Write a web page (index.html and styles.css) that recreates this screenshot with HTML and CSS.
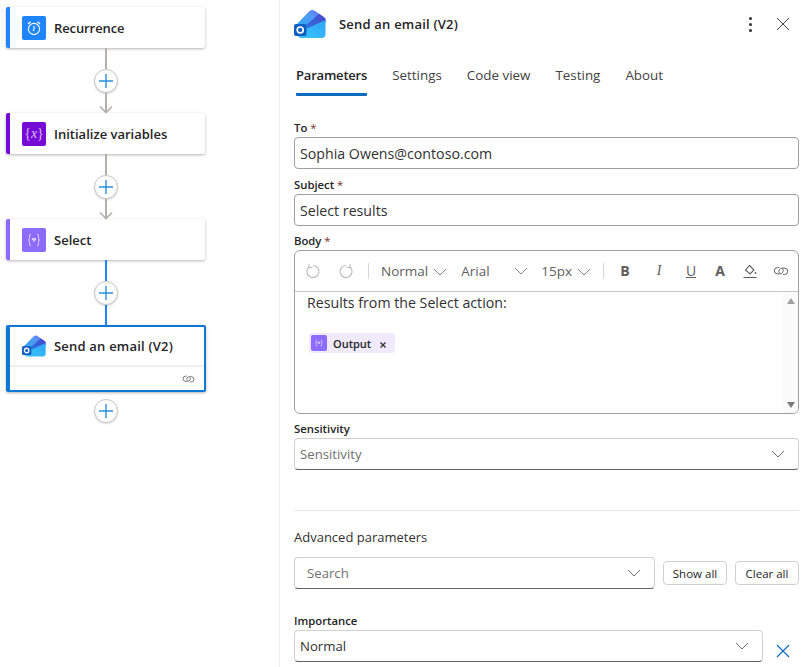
FILE: index.html
```html
<!DOCTYPE html>
<html lang="en">
<head>
    <meta charset="UTF-8">
    <title>Send an email (V2)</title>
    <link rel="stylesheet" href="styles.css">
</head>
<body>
    <svg class="defs" width="0" height="0">
        <defs>
            <linearGradient id="gradBack" x1="0" y1="1" x2="1" y2="0">
                <stop offset="0" stop-color="#27a8f5"/>
                <stop offset=".6" stop-color="#4f9cf5"/>
                <stop offset="1" stop-color="#7a5ff0"/>
            </linearGradient>
            <linearGradient id="gradBand" x1="0" y1="1" x2="1" y2="0">
                <stop offset="0" stop-color="#2a7be8"/>
                <stop offset="1" stop-color="#4a44c8"/>
            </linearGradient>
            <linearGradient id="gradFront" x1="0" y1="1" x2="1" y2="0">
                <stop offset="0" stop-color="#38c4fa"/>
                <stop offset="1" stop-color="#2fa6f5"/>
            </linearGradient>
            <symbol id="outlook" viewBox="0 0 32 30">
                <path d="M3 15 L15 2.500 Q18 0 21 2 L29.500 7.500 Q31.500 9 31.500 11 V14 L15 22 Z" fill="url(#gradBack)"/>
                <path d="M11 17 L25 5 L31.500 9.500 V13 L17 22 Z" fill="url(#gradBand)"/>
                <path d="M4 26 L12 20 L31.500 11 V25 Q31.500 29 27.500 29 H7 Q4 29 4 26 Z" fill="url(#gradFront)"/>
                <rect x="0" y="15" width="12.500" height="12" rx="2" fill="#0f5fc0"/>
                <circle cx="6.200" cy="21" r="3" fill="none" stroke="#fff" stroke-width="1.700"/>
            </symbol>
            <symbol id="chevron" viewBox="0 0 14 8">
                <path d="M1 1 L7 7 L13 1" fill="none" stroke="currentColor" stroke-width="1"/>
            </symbol>
            <symbol id="linkIcon" viewBox="0 0 16 12">
                <path d="M6 2.500 H4.500 a3.200 3.200 0 0 0 0 6.400 H7 a3.200 3.200 0 0 0 2.600 -5" fill="none" stroke="currentColor" stroke-width="1"/>
                <path d="M10 9.500 H11.500 a3.200 3.200 0 0 0 0 -6.400 H9 a3.200 3.200 0 0 0 -2.600 5" fill="none" stroke="currentColor" stroke-width="1"/>
            </symbol>
            <symbol id="plus" viewBox="0 0 14 14">
                <path d="M7 0 V14 M0 7 H14" stroke="#2b8fdc" stroke-width="1.400"/>
            </symbol>
        </defs>
    </svg>

    <div class="canvas">
        <div class="card card-blue">
            <div class="card-head">
                <span class="node-icon icon-blue">
                    <svg width="16" height="16" viewBox="0 0 16 16" fill="none" stroke="#fff" stroke-width="1.100">
                        <circle cx="8" cy="9" r="5.600"/>
                        <path d="M8 6 V9.500 L7 11"/>
                        <path d="M2 4 L4.500 1.800 M14 4 L11.500 1.800" stroke-width="1.500"/>
                    </svg>
                </span>
                <span class="card-title">Recurrence</span>
            </div>
        </div>
        <div class="line line-top"></div>
        <button class="add"><svg width="14" height="14"><use href="#plus"/></svg></button>
        <div class="line line-arrow">
            <svg width="14" height="9" viewBox="0 0 14 9"><path d="M1 1.500 L7 7.500 L13 1.500" fill="none" stroke="#b3b0ad" stroke-width="1.600"/></svg>
        </div>

        <div class="card card-purple">
            <div class="card-head">
                <span class="node-icon icon-purple"><span class="var-x">{<i>x</i>}</span></span>
                <span class="card-title">Initialize variables</span>
            </div>
        </div>
        <div class="line line-top"></div>
        <button class="add"><svg width="14" height="14"><use href="#plus"/></svg></button>
        <div class="line line-arrow">
            <svg width="14" height="9" viewBox="0 0 14 9"><path d="M1 1.500 L7 7.500 L13 1.500" fill="none" stroke="#b3b0ad" stroke-width="1.600"/></svg>
        </div>

        <div class="card card-violet">
            <div class="card-head">
                <span class="node-icon icon-violet">
                    <svg width="14" height="14" viewBox="0 0 14 14" fill="none" stroke="#d9ceff" stroke-width="1">
                        <path d="M4 1 Q2.500 1 2.500 3 V5.500 Q2.500 7 1 7 Q2.500 7 2.500 8.500 V11 Q2.500 13 4 13"/>
                        <path d="M10 1 Q11.500 1 11.500 3 V5.500 Q11.500 7 13 7 Q11.500 7 11.500 8.500 V11 Q11.500 13 10 13"/>
                        <path d="M5 5.500 H9 L7 8.500 Z" fill="#d9ceff"/>
                    </svg>
                </span>
                <span class="card-title">Select</span>
            </div>
        </div>
        <div class="line line-top line-active"></div>
        <button class="add"><svg width="14" height="14"><use href="#plus"/></svg></button>
        <div class="line line-bottom line-active"></div>

        <div class="card card-selected">
            <div class="card-head">
                <svg class="node-icon" width="24" height="24"><use href="#outlook"/></svg>
                <span class="card-title">Send an email (V2)</span>
            </div>
            <div class="card-foot">
                <svg width="13" height="10" class="foot-link"><use href="#linkIcon"/></svg>
            </div>
        </div>
        <div class="line line-end"></div>
        <button class="add"><svg width="14" height="14"><use href="#plus"/></svg></button>
    </div>

    <div class="panel">
        <div class="panel-head">
            <svg width="32" height="30"><use href="#outlook"/></svg>
            <h1 class="panel-title">Send an email (V2)</h1>
            <span class="dots"><i></i><i></i><i></i></span>
            <svg class="close" width="14" height="14" viewBox="0 0 14 14"><path d="M1 1 L13 13 M13 1 L1 13" stroke="#444" stroke-width="1"/></svg>
        </div>

        <div class="tabs">
            <span class="tab tab-active">Parameters</span>
            <span class="tab">Settings</span>
            <span class="tab">Code view</span>
            <span class="tab">Testing</span>
            <span class="tab">About</span>
        </div>

        <div class="field field-to">
            <label>To <b>*</b></label>
            <div class="input">Sophia Owens@contoso.com</div>
        </div>
        <div class="field field-subject">
            <label>Subject <b>*</b></label>
            <div class="input">Select results</div>
        </div>
        <div class="field">
            <label>Body <b>*</b></label>
            <div class="editor">
                <div class="toolbar">
                    <svg class="tool-undo" width="16" height="16" viewBox="0 0 16 16" fill="none" stroke="#bdbbb9" stroke-width="1.200"><path d="M4 4 A6 6 0 1 0 8 2.500"/><path d="M4 1 V4.500 H7.500" stroke-width="1"/></svg>
                    <svg class="tool-redo" width="16" height="16" viewBox="0 0 16 16" fill="none" stroke="#bdbbb9" stroke-width="1.200"><path d="M12 4 A6 6 0 1 1 8 2.500"/><path d="M12 1 V4.500 H8.500" stroke-width="1"/></svg>
                    <span class="tool-sep"></span>
                    <span class="tool-drop drop-normal">Normal<svg width="14" height="8"><use href="#chevron"/></svg></span>
                    <span class="tool-drop drop-font">Arial<svg width="14" height="8"><use href="#chevron"/></svg></span>
                    <span class="tool-drop drop-size">15px<svg width="14" height="8"><use href="#chevron"/></svg></span>
                    <span class="tool-sep sep-two"></span>
                    <span class="tool-fmt fmt-b">B</span>
                    <span class="tool-fmt fmt-i">I</span>
                    <span class="tool-fmt fmt-u">U</span>
                    <span class="tool-fmt fmt-a">A</span>
                    <svg class="tool-fill" width="16" height="16" viewBox="0 0 16 16" fill="none" stroke="#605e5c" stroke-width="1.100"><path d="M7.500 2.500 L12 7 L8 11 L3.500 7 Z"/><circle cx="13.500" cy="10" r=".9" fill="#605e5c" stroke="none"/><path d="M1.500 14.500 H14.500"/></svg>
                    <svg class="tool-link" width="18" height="12"><use href="#linkIcon"/></svg>
                </div>
                <div class="editor-body">
                    <div class="editor-text">
                        <p>Results from the Select action:</p>
                        <span class="chip">
                            <span class="chip-icon">
                                <svg width="8" height="8" viewBox="0 0 14 14" fill="none" stroke="#e3dbff" stroke-width="1.200"><path d="M4 1 Q2.500 1 2.500 3 V5.500 Q2.500 7 1 7 Q2.500 7 2.500 8.500 V11 Q2.500 13 4 13"/><path d="M10 1 Q11.500 1 11.500 3 V5.500 Q11.500 7 13 7 Q11.500 7 11.500 8.500 V11 Q11.500 13 10 13"/><path d="M5 5.500 H9 L7 8.500 Z" fill="#e3dbff"/></svg>
                            </span>
                            <span class="chip-text">Output</span>
                            <svg class="chip-x" width="6" height="6" viewBox="0 0 6 6"><path d="M.5 .5 L5.500 5.500 M5.500 .5 L.5 5.500" stroke="#323130" stroke-width="1.300"/></svg>
                        </span>
                    </div>
                    <div class="scrollbar"><i class="tri-up"></i><i class="tri-down"></i></div>
                </div>
            </div>
        </div>
        <div class="field">
            <label>Sensitivity</label>
            <div class="input select placeholder">Sensitivity<svg width="14" height="8"><use href="#chevron"/></svg></div>
        </div>

        <hr class="divider">

        <div class="adv-title">Advanced parameters</div>
        <div class="adv-row">
            <div class="input select placeholder search">Search<svg width="14" height="8"><use href="#chevron"/></svg></div>
            <button class="small-btn">Show all</button>
            <button class="small-btn">Clear all</button>
        </div>

        <div class="field field-imp">
            <label>Importance</label>
            <div class="imp-row">
                <div class="input select">Normal<svg width="14" height="8"><use href="#chevron"/></svg></div>
                <svg class="imp-x" width="14" height="14" viewBox="0 0 14 14"><path d="M1 1 L13 13 M13 1 L1 13" stroke="#0f6cbd" stroke-width="1.200"/></svg>
            </div>
        </div>
    </div>
</body>
</html>
```

FILE: styles.css
```css
* {
    box-sizing: border-box;
}
html, body {
    height: 100%;
}
body {
    margin: 0;
    display: flex;
    overflow: hidden;
    background-color: #fff;
    color: #242424;
    font-family: "Open Sans", "Noto Sans", sans-serif;
    font-size: 13px;
}
.defs {
    position: absolute;
}

/* flow diagram */
.canvas {
    width: 280px;
    flex-shrink: 0;
    height: 100%;
    border-right: 1px solid #eeedec;
    padding: 7px 0 0 6px;
    display: flex;
    flex-direction: column;
    align-items: flex-start;
}
.card {
    width: 199px;
    background-color: #fff;
    border-left: 4px solid #1f85ff;
    border-radius: 2px;
    box-shadow: 0 1px 3px rgba(0, 0, 0, 0.3);
}
.card-purple {
    border-left-color: #770bd6;
}
.card-violet {
    border-left-color: #8c6cff;
}
.card-selected {
    width: 200px;
    border: 2px solid #0f78d4;
    border-left-width: 4px;
}
.card-head {
    height: 41px;
    display: flex;
    align-items: center;
    padding-left: 12px;
    gap: 8px;
}
.card-selected .card-head {
    height: 40px;
    border-bottom: 2px solid #f0f0f0;
}
.card-foot {
    height: 23px;
    display: flex;
    justify-content: flex-end;
    align-items: center;
    padding-right: 9px;
    color: #605e5c;
}
.card-title {
    font-weight: 600;
    font-size: 13px;
    white-space: nowrap;
}
.card-blue .card-title {
    letter-spacing: -0.1px;
}
.card-selected .card-title {
    letter-spacing: 0.2px;
}
.node-icon {
    width: 24px;
    height: 24px;
    border-radius: 2px;
    display: flex;
    align-items: center;
    justify-content: center;
    flex-shrink: 0;
}
.icon-blue {
    background-color: #1f85ff;
}
.icon-purple {
    background-color: #770bd6;
}
.icon-violet {
    background-color: #8c6cff;
}
.var-x {
    color: #d9bff5;
    font-family: "Liberation Serif", serif;
    font-size: 14px;
}
.line {
    width: 2px;
    margin-left: 99px;
    background-color: #b3b0ad;
    flex-shrink: 0;
    position: relative;
}
.line-top {
    height: 21px;
}
.line-arrow {
    height: 20px;
}
.line-arrow svg {
    position: absolute;
    left: -6px;
    bottom: -1px;
}
.line-bottom {
    height: 20px;
}
.line-end {
    height: 7px;
    background-color: transparent;
}
.line-active {
    background-color: #1f85ff;
}
.add {
    width: 24px;
    height: 24px;
    margin-left: 88px;
    padding: 0;
    background-color: #fff;
    border: 1px solid #c8c6c4;
    border-radius: 50%;
    box-shadow: 0 1px 2px rgba(0, 0, 0, 0.15);
    display: flex;
    align-items: center;
    justify-content: center;
    flex-shrink: 0;
}

/* details panel */
.panel {
    flex: 1;
    min-width: 0;
    padding: 9px 8px 0 14px;
}
.panel-head {
    display: flex;
    align-items: center;
    height: 30px;
}
.panel-title {
    margin: 0 0 0 13px;
    font-size: 13px;
    font-weight: 600;
    flex: 1;
    letter-spacing: 0.2px;
}
.dots {
    display: flex;
    flex-direction: column;
    gap: 3px;
    margin-right: 24px;
}
.dots i {
    width: 3px;
    height: 3px;
    border-radius: 50%;
    background-color: #323130;
}
.close {
    margin-right: 9px;
}
.tabs {
    display: flex;
    gap: 25px;
    margin: 25px 0 0 2px;
    height: 33px;
    color: #424242;
}
.tab {
    height: 32px;
    font-size: 13.4px;
    line-height: 22px;
    white-space: nowrap;
}
.tab-active {
    color: #242424;
    font-size: 13px;
    font-weight: 600;
    letter-spacing: -0.2px;
    border-bottom: 3px solid #0f6cbd;
    border-radius: 1px;
}
.field label {
    display: block;
    height: 16px;
    line-height: 16px;
    font-size: 11.3px;
    font-weight: 600;
    margin-bottom: 1px;
}
.field label b {
    color: #7a2e2e;
    font-weight: 400;
}
.field {
    margin-top: 7px;
}
.field-to {
    margin-top: 23px;
}
.field-subject {
    margin-top: 8px;
}
.input {
    height: 32px;
    border: 1px solid #a19f9d;
    border-radius: 4px;
    padding: 0 5px;
    display: flex;
    align-items: center;
    font-size: 14.2px;
    color: #323130;
}
.select {
    justify-content: space-between;
    border-color: #d1d1d1;
    border-bottom-color: #616161;
    padding-right: 13px;
    font-size: 13.2px;
}
.select svg {
    color: #707070;
}
.placeholder {
    color: #707070;
}
.editor {
    height: 164px;
    border: 1px solid #a19f9d;
    border-radius: 6px;
    display: flex;
    flex-direction: column;
    overflow: hidden;
}
.toolbar {
    height: 41px;
    flex-shrink: 0;
    border-bottom: 1px solid #c8c6c4;
    display: flex;
    align-items: center;
    padding-left: 10px;
    color: #605e5c;
}
.tool-redo {
    margin-left: 17px;
}
.tool-sep {
    width: 1px;
    height: 16px;
    background-color: #d8d6d4;
    margin: 0 12px 0 14px;
}
.tool-drop {
    display: flex;
    align-items: center;
    font-size: 13.5px;
    white-space: nowrap;
}
.tool-drop svg {
    color: #8a8886;
}
.drop-normal svg {
    margin: 2px 0 0 5px;
}
.drop-font {
    width: 67px;
    margin-left: 14px;
    justify-content: space-between;
}
.drop-size {
    margin-left: 13px;
}
.drop-size svg {
    margin: 2px 0 0 5px;
}
.sep-two {
    margin: 0 15px 0 12px;
}
.tool-fmt {
    width: 12px;
    text-align: center;
    font-size: 14px;
    margin-right: 20px;
    line-height: 16px;
}
.fmt-b, .fmt-a {
    font-weight: 700;
}
.fmt-b {
    margin-right: 22px;
}
.fmt-i {
    font-family: "Liberation Serif", serif;
    font-style: italic;
}
.fmt-u {
    margin-right: 17px;
    text-decoration: underline;
}
.fmt-a {
    margin-right: 16px;
}
.tool-link {
    margin-left: 14px;
}
.editor-body {
    flex: 1;
    display: flex;
    min-height: 0;
}
.editor-text {
    flex: 1;
    padding: 0 0 0 12px;
}
.editor-text p {
    margin: 0 0 19px;
    font-size: 14.2px;
    line-height: 22px;
    color: #323130;
}
.chip {
    display: inline-flex;
    align-items: center;
    height: 20px;
    width: 86px;
    margin-left: 2px;
    padding-left: 2px;
    background-color: #efeafd;
    border-radius: 3px;
    font-size: 11px;
    font-weight: 600;
}
.chip-icon {
    width: 16px;
    height: 16px;
    border-radius: 2px;
    background-color: #8c6cff;
    display: flex;
    align-items: center;
    justify-content: center;
}
.chip-text {
    margin-left: 6px;
}
.chip-x {
    margin: 4px 0 0 9px;
}
.scrollbar {
    width: 15px;
    background-color: #fafafa;
    display: flex;
    flex-direction: column;
    justify-content: space-between;
    align-items: center;
    padding: 6px 0 5px;
}
.tri-up, .tri-down {
    width: 0;
    height: 0;
    border-left: 4px solid transparent;
    border-right: 4px solid transparent;
}
.tri-up {
    border-bottom: 6px solid #a0a0a0;
}
.tri-down {
    border-top: 6px solid #7a7a7a;
}
.divider {
    margin: 40px 0 0;
    border: none;
    border-top: 1px solid #e6e6e6;
}
.adv-title {
    margin-top: 16px;
    font-size: 13px;
    line-height: 20px;
    color: #323130;
}
.adv-row {
    display: flex;
    align-items: center;
    gap: 8px;
    margin-top: 10px;
}
.search {
    flex: 1;
    padding-left: 12px;
}
.small-btn {
    width: 64px;
    height: 24px;
    padding: 0;
    background-color: #fff;
    border: 1px solid #d1d1d1;
    border-radius: 4px;
    font-family: inherit;
    font-size: 11.5px;
    color: #242424;
}
.field-imp {
    margin-top: 24px;
}
.imp-row {
    display: flex;
    align-items: center;
}
.imp-row .input {
    flex: 1;
}
.imp-x {
    margin: 10px 9px 0 13px;
}
```
